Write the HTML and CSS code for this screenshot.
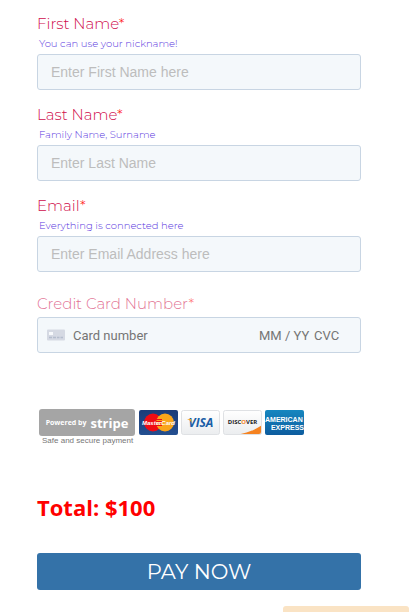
FILE: index.html
```
<!DOCTYPE html>
<html lang="en">
<head>
<meta charset="utf-8">
<meta name="viewport" content="width=device-width, initial-scale=1">
<title>Payment</title>
<link rel="stylesheet" href="styles.css">
</head>
<body>
<form class="form">
  <div class="field">
    <label class="label" for="first">First Name<span class="req">*</span></label>
    <p class="hint">You can use your nickname!</p>
    <input class="input" id="first" type="text" placeholder="Enter First Name here">
  </div>
  <div class="field">
    <label class="label" for="last">Last Name<span class="req">*</span></label>
    <p class="hint">Family Name, Surname</p>
    <input class="input" id="last" type="text" placeholder="Enter Last Name">
  </div>
  <div class="field">
    <label class="label" for="email">Email<span class="req">*</span></label>
    <p class="hint">Everything is connected here</p>
    <input class="input" id="email" type="email" placeholder="Enter Email Address here">
  </div>
  <div class="field field-card">
    <label class="label label-card" for="card">Credit Card Number<span class="req">*</span></label>
    <div class="card-box">
      <svg class="card-icon" viewBox="0 0 18 12" aria-hidden="true">
        <rect width="18" height="11" y="0.5" rx="1" fill="#d5d9e3"/>
        <rect x="2" y="3" width="4" height="3" fill="#f7f9fc"/>
        <path d="M2 8.500h3M6 8.500h3M10 8.500h2.500M13.500 8.500h2.500" stroke="#b4bdcd" stroke-width="1.500"/>
      </svg>
      <input class="card-input card-number" id="card" type="text" placeholder="Card number">
      <input class="card-input card-date" type="text" aria-label="Expiry date" placeholder="MM / YY">
      <input class="card-input card-cvc" type="text" aria-label="CVC" placeholder="CVC">
    </div>
  </div>

  <div class="badges">
    <div class="stripe">
      <div class="stripe-box"><span class="stripe-by">Powered by</span><span class="stripe-name">stripe</span></div>
      <span class="stripe-note">Safe and secure payment</span>
    </div>
    <svg class="brand" viewBox="0 0 39 25" role="img" aria-label="MasterCard">
      <defs><linearGradient id="mc" x2="0" y2="1"><stop stop-color="#1c3c78"/><stop offset="1" stop-color="#234f90"/></linearGradient></defs>
      <rect width="39" height="25" rx="2" fill="url(#mc)"/>
      <circle cx="14" cy="12.500" r="9" fill="#ee0c14"/>
      <circle cx="26" cy="12.500" r="9" fill="#f9a51a"/>
      <path d="M17 9.500h6M17 11.500h6M17 13.500h6M17 15.500h6" stroke="#ee0c14"/>
      <text class="brand-mc" x="19.500" y="15" text-anchor="middle">MasterCard</text>
    </svg>
    <svg class="brand" viewBox="0 0 39 25" role="img" aria-label="Visa">
      <defs><linearGradient id="paper" x2="0" y2="1"><stop stop-color="#ffffff"/><stop offset="1" stop-color="#ebedef"/></linearGradient></defs>
      <rect x=".5" y=".5" width="38" height="24" rx="2" fill="url(#paper)" stroke="#dfe1e4"/>
      <text class="brand-visa" x="20" y="17" text-anchor="middle">VISA</text>
      <path d="M6 9h4l1 4C10 11 8.500 10 6 9z" fill="#f0a51e"/>
    </svg>
    <svg class="brand" viewBox="0 0 39 25" role="img" aria-label="Discover">
      <defs><clipPath id="dc"><rect x="1" y="1" width="37" height="23" rx="2"/></clipPath></defs>
      <rect x=".5" y=".5" width="38" height="24" rx="2" fill="url(#paper)" stroke="#dfe1e4"/>
      <path d="M11 25C22 24 32 20 39 15v10z" fill="#f58220" clip-path="url(#dc)"/>
      <text class="brand-disc" x="19.500" y="14" text-anchor="middle">DISC<tspan fill="#f58220">O</tspan>VER</text>
    </svg>
    <svg class="brand" viewBox="0 0 39 25" role="img" aria-label="American Express">
      <defs><linearGradient id="ax" x2="0" y2="1"><stop stop-color="#1687c0"/><stop offset="1" stop-color="#0d5c9e"/></linearGradient></defs>
      <rect width="39" height="25" rx="2" fill="url(#ax)"/>
      <text class="brand-amex" x="0" y="12">AMERICAN</text>
      <text class="brand-amex" x="39" y="20" text-anchor="end">EXPRESS</text>
    </svg>
  </div>

  <p class="total">Total: $100</p>
  <button class="pay" type="button">PAY NOW</button>
</form>
<div class="notice"></div>
</body>
</html>
```
FILE: styles.css
```
* { box-sizing: border-box; }
body {
  margin: 0;
  background: #fff;
  font-family: Montserrat, Inter, sans-serif;
}
.form { padding: 14px 54px 0 37px; }
.field { margin-bottom: 15px; }
.label {
  display: block;
  font-size: 15px;
  line-height: 20px;
  font-weight: 300;
  color: #cf0c4c;
}
.req { color: #ff1a1a; }
.hint {
  margin: 0 2px 1px;
  font-size: 10px;
  line-height: 19px;
  font-weight: 300;
  color: #5a38e0;
}
.input {
  display: block;
  width: 100%;
  height: 36px;
  padding: 0 13px;
  border: 1px solid #c8d5e3;
  border-radius: 3px;
  background: #f4f8fb;
  font: 14px "Liberation Sans", sans-serif;
  color: #555;
}
.input::placeholder { color: #bdbdbd; opacity: 1; }
.field-card { margin: 22px 0 56px; }
.label-card { margin-bottom: 3px; opacity: .6; }
.card-box {
  display: flex;
  align-items: center;
  height: 36px;
  padding: 0 16px 0 9px;
  border: 1px solid #c8d5e3;
  border-radius: 3px;
  background: #f4f8fb;
}
.card-icon { width: 18px; height: 12px; margin-right: 8px; flex: none; }
.card-input {
  min-width: 0;
  padding: 0;
  border: 0;
  background: transparent;
  font: 13px Roboto, sans-serif;
  color: #555;
}
.card-input::placeholder { color: #757575; opacity: 1; }
.card-number { flex: 1; }
.card-date { width: 55px; }
.card-cvc { width: 30px; }
.badges { display: flex; gap: 3px; padding-left: 2px; }
.stripe { width: 97px; }
.stripe-box {
  display: flex;
  align-items: center;
  justify-content: center;
  gap: 4px;
  height: 27px;
  margin-right: 1px;
  border-radius: 3px;
  background: #a5a5a5;
  color: #fff;
  font-family: "Open Sans", sans-serif;
  font-weight: 700;
}
.stripe-by { font-size: 7px; }
.stripe-name { font-size: 13px; line-height: 20px; }
.stripe-note {
  display: block;
  padding: 1px 0 0 3px;
  font: 8px/8px "Liberation Sans", sans-serif;
  white-space: nowrap;
  color: #777;
}
.brand { width: 39px; height: 25px; margin-top: 1px; flex: none; }
.brand-mc { font: italic 700 6px "Liberation Sans", sans-serif; fill: #fff; }
.brand-visa { font: italic 700 12px "Open Sans", sans-serif; fill: #1a5ea6; }
.brand-disc { font: 700 6px "Open Sans", sans-serif; fill: #222; }
.brand-amex { font: 700 7px "Liberation Sans", sans-serif; fill: #fff; }
.total {
  margin: 47px 0 31px;
  font: 700 22px/30px "Open Sans", sans-serif;
  color: #f00;
}
.pay {
  display: block;
  width: 100%;
  height: 37px;
  padding: 0;
  border: 0;
  border-radius: 3px;
  background: #3472a8;
  color: #fff;
  font: 400 21px Montserrat, Inter, sans-serif;
}
.notice {
  width: 126px;
  height: 6px;
  margin: 16px 6px 0 auto;
  border-radius: 3px 3px 0 0;
  background: #fae3c4;
}
```
